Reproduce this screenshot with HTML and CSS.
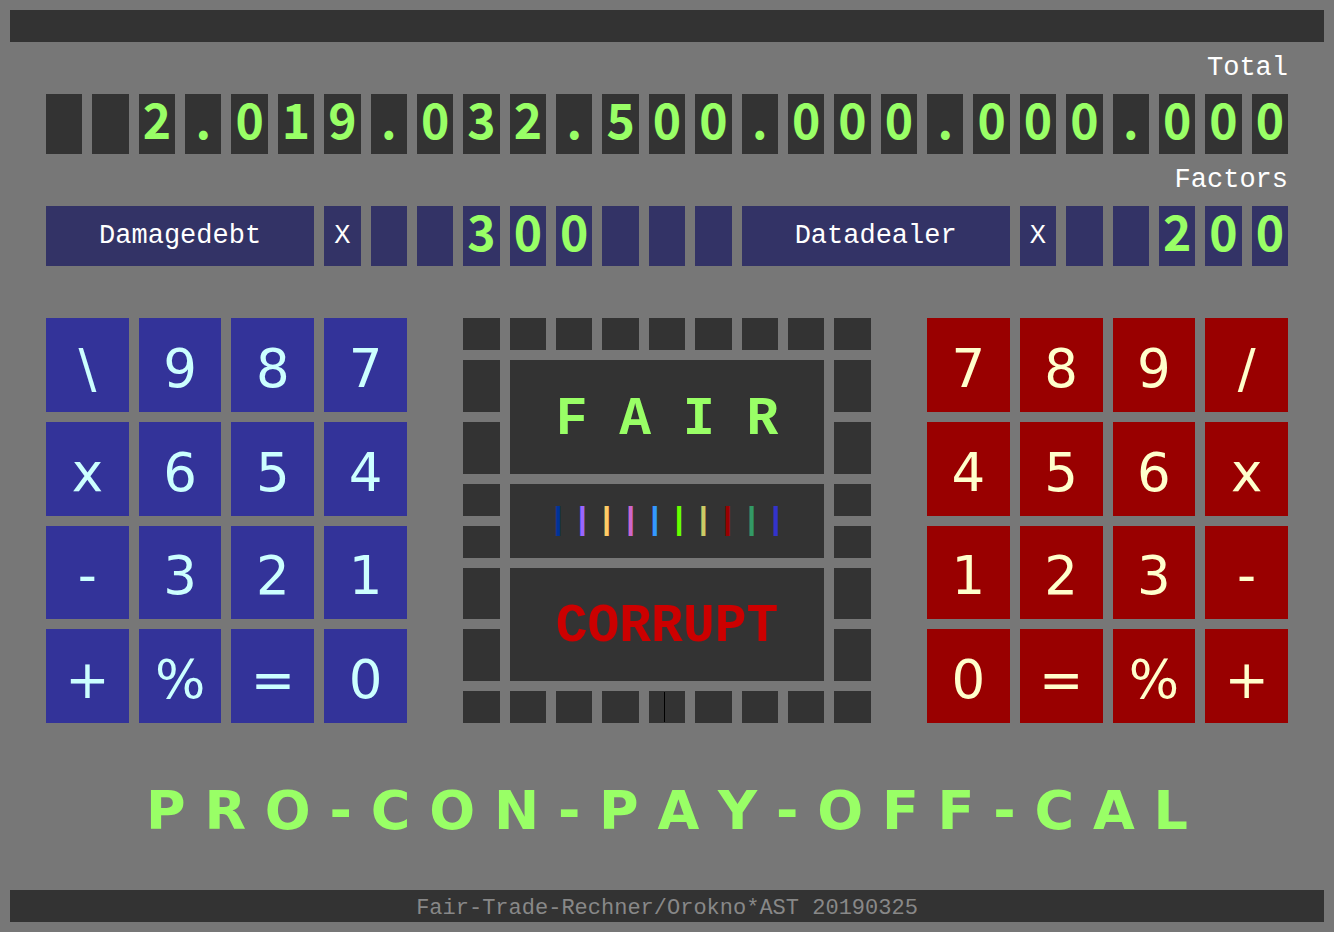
FILE: index.html
```html
<!DOCTYPE html>
<html lang="en">
<head>
    <meta charset="UTF-8">
    <meta name="viewport" content="width=device-width, initial-scale=1.0">
    <title>PRO-CON-PAY-OFF-CAL</title>
    <link rel="stylesheet" href="styles.css">
</head>
<body>
    <header class="bar"></header>

    <main class="calculator">
        <!-- Total -->
        <div class="caption" id="total-label">Total</div>
        <div class="row total" role="group" aria-labelledby="total-label">
            <span></span><span></span><span>2</span><span>.</span><span>0</span><span>1</span><span>9</span><span>.</span><span>0</span>
            <span>3</span><span>2</span><span>.</span><span>5</span><span>0</span><span>0</span><span>.</span><span>0</span><span>0</span>
            <span>0</span><span>.</span><span>0</span><span>0</span><span>0</span><span>.</span><span>0</span><span>0</span><span>0</span>
        </div>

        <!-- Factors -->
        <div class="caption" id="factors-label">Factors</div>
        <div class="row factors" role="group" aria-labelledby="factors-label">
            <span class="name">Damagedebt</span><span class="times">X</span>
            <span></span><span></span><span>3</span><span>0</span><span>0</span><span></span><span></span><span></span>
            <span class="name">Datadealer</span><span class="times">X</span>
            <span></span><span></span><span>2</span><span>0</span><span>0</span>
        </div>

        <div class="pads">
            <div class="keypad keypad-left">
                <button type="button">\</button>
                <button type="button">9</button>
                <button type="button">8</button>
                <button type="button">7</button>
                <button type="button">x</button>
                <button type="button">6</button>
                <button type="button">5</button>
                <button type="button">4</button>
                <button type="button">-</button>
                <button type="button">3</button>
                <button type="button">2</button>
                <button type="button">1</button>
                <button type="button">+</button>
                <button type="button">%</button>
                <button type="button">=</button>
                <button type="button">0</button>
            </div>

            <!-- Fair / corrupt display with its frame of lamps -->
            <div class="display">
                <i></i><i></i><i></i><i></i><i></i><i></i><i></i><i></i><i></i>
                <i></i><div class="screen screen-tall fair">F A I R</div><i></i>
                <i></i><i></i>
                <i></i><div class="screen scale"><span class="c1">|</span><span class="c2">|</span><span class="c3">|</span><span class="c4">|</span><span class="c5">|</span><span class="c6">|</span><span class="c7">|</span><span class="c8">|</span><span class="c9">|</span><span class="c10">|</span></div><i></i>
                <i></i><i></i>
                <i></i><div class="screen screen-tall corrupt">CORRUPT</div><i></i>
                <i></i><i></i>
                <i></i><i></i><i></i><i></i><i class="needle"></i><i></i><i></i><i></i><i></i>
            </div>

            <div class="keypad keypad-right">
                <button type="button">7</button>
                <button type="button">8</button>
                <button type="button">9</button>
                <button type="button">/</button>
                <button type="button">4</button>
                <button type="button">5</button>
                <button type="button">6</button>
                <button type="button">x</button>
                <button type="button">1</button>
                <button type="button">2</button>
                <button type="button">3</button>
                <button type="button">-</button>
                <button type="button">0</button>
                <button type="button">=</button>
                <button type="button">%</button>
                <button type="button">+</button>
            </div>
        </div>

        <h1>P R O - C O N - P A Y - O F F - C A L</h1>
    </main>

    <footer class="bar">Fair-Trade-Rechner/Orokno*AST 20190325</footer>
</body>
</html>
```
FILE: styles.css
```css
* {
    box-sizing: border-box;
}
body {
    display: flex;
    flex-direction: column;
    gap: 10px;
    min-height: 100vh;
    margin: 0;
    padding: 10px;
    background-color: #777;
    font-family: "Courier New", "Liberation Mono", monospace;
}
.bar {
    height: 32px;
    background-color: #333;
    color: #888;
    font-size: 22px;
    line-height: 38px;
    text-align: center;
}
.calculator {
    flex: 1;
    display: flex;
    flex-direction: column;
    gap: 10px;
    padding: 0 36px;
}
.caption {
    height: 32px;
    color: #fff;
    font-size: 27px;
    line-height: 32px;
    text-align: right;
}

/* Number rows */
.row {
    display: grid;
    grid-template-columns: repeat(27, 1fr);
    gap: 10px;
}
.row span {
    height: 60px;
    min-width: 0;
    background-color: #333;
    color: #9f6;
    font-family: "Noto Sans CJK JP", sans-serif;
    font-size: 48px;
    font-weight: bold;
    line-height: 48px;
    text-align: center;
}
.row.factors span {
    background-color: #336;
}
.row .name, .row .times {
    color: #fff;
    font-family: "Courier New", "Liberation Mono", monospace;
    font-size: 27px;
    font-weight: normal;
    line-height: 60px;
}
.row .name {
    grid-column: span 6;
}

/* Keypads and display */
.pads {
    flex: 1;
    display: grid;
    grid-template-columns: repeat(27, 1fr);
    gap: 10px;
    margin: 42px 0;
}
.keypad {
    display: grid;
    grid-template-columns: repeat(4, 1fr);
    grid-template-rows: repeat(4, 1fr);
    gap: 10px;
    grid-column: 1 / span 8;
}
.keypad-right {
    grid-column: 20 / span 8;
}
.keypad button {
    min-width: 0;
    padding: 8px 0 0;
    border: none;
    background-color: #339;
    color: #cff;
    font-family: Verdana, "DejaVu Sans", sans-serif;
    font-size: 53px;
    line-height: 60px;
    cursor: pointer;
}
.keypad-right button {
    background-color: #900;
    color: #ffc;
}
.display {
    display: grid;
    grid-column: 10 / span 9;
    grid-template-columns: repeat(9, 1fr);
    grid-template-rows: 32px 1fr 1fr 32px 32px 1fr 1fr 32px;
    gap: 10px;
}
.display i {
    background-color: #333;
}
.screen {
    display: flex;
    align-items: center;
    justify-content: center;
    gap: 5px;
    grid-column: span 7;
    grid-row: span 2;
    background-color: #333;
    font-size: 32px;
    font-weight: bold;
}
.screen-tall {
    padding-top: 6px;
    font-size: 53px;
}
.fair {
    color: #9f6;
}
.corrupt {
    color: #c00;
}
.display .needle {
    padding: 1px 15px;
}
.needle::before {
    content: "";
    display: block;
    width: 1px;
    height: 30px;
    background-color: #000;
}
.c1 { color: #039; }
.c2 { color: #96f; }
.c3 { color: #fc6; }
.c4 { color: #c6c; }
.c5 { color: #39f; }
.c6 { color: #6f0; }
.c7 { color: #cc6; }
.c8 { color: #900; }
.c9 { color: #396; }
.c10 { color: #33c; }

h1 {
    height: 63px;
    margin: 0 0 42px;
    color: #9f6;
    font-family: Verdana, "DejaVu Sans", sans-serif;
    font-size: 54px;
    line-height: 72px;
    text-align: center;
    white-space: nowrap;
}
```
